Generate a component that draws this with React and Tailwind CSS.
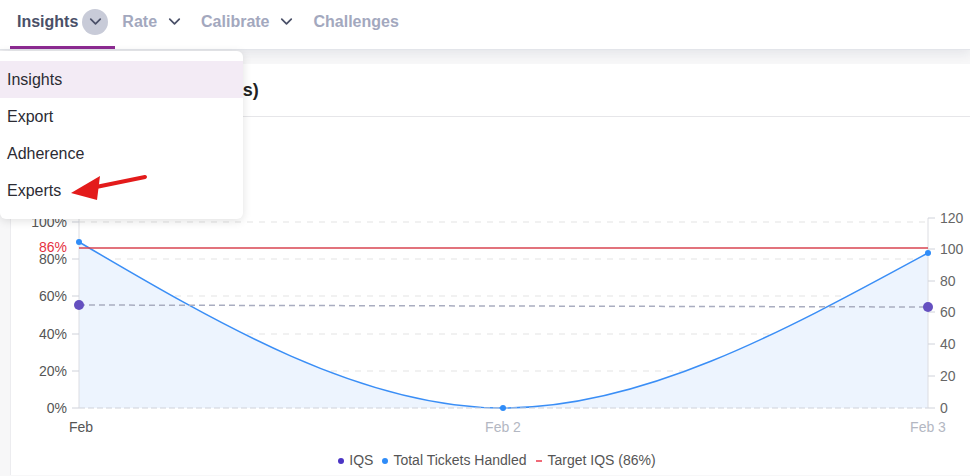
import { ChevronDown } from "lucide-react";

const font = { fontFamily: '"Liberation Sans", Arial, sans-serif' };

// chart geometry in page coordinates (svg is translated back by the card offset)
const leftTicks = [
  { y: 223, label: "100%" },
  { y: 260, label: "80%" },
  { y: 297, label: "60%" },
  { y: 335, label: "40%" },
  { y: 372, label: "20%" },
  { y: 409, label: "0%" },
];

const rightTicks = [
  { y: 219, label: "120" },
  { y: 250, label: "100" },
  { y: 282, label: "80" },
  { y: 313, label: "60" },
  { y: 345, label: "40" },
  { y: 377, label: "20" },
  { y: 409, label: "0" },
];

const curve =
  "M78 243 C219 326 361 409 502 409 C644 409 785 331 927 254";

function Chart() {
  return (
    <svg width="960" height="358" className="block" style={font}>
      <g transform="translate(-10,-118)">
        {leftTicks.slice(0, 5).map((t) => (
          <line
            key={t.y}
            x1="78"
            x2="927"
            y1={t.y}
            y2={t.y}
            stroke="#e3e3e3"
            strokeDasharray="6 6"
          />
        ))}

        {/* area + tickets line */}
        <path d={curve + " L927 409 L78 409 Z"} fill="#edf4fe" />
        <path d={curve} fill="none" stroke="#3a8ef6" strokeWidth="1.5" />

        {/* axes */}
        <line x1="78" x2="927" y1="409" y2="409" stroke="#cfd2da" strokeDasharray="6 3" />
        <line x1="78" x2="78" y1="219" y2="409" stroke="#dcdde2" />
        <line x1="927" x2="927" y1="219" y2="409" stroke="#dcdde2" />

        {leftTicks.map((t) => (
          <g key={t.label}>
            <line x1="71" x2="78" y1={t.y} y2={t.y} stroke="#cfd2da" />
            <text x="66" y={t.y + 5} textAnchor="end" fontSize="14" fill="#555">
              {t.label}
            </text>
          </g>
        ))}
        {rightTicks.map((t) => (
          <g key={t.label}>
            <line x1="927" x2="934" y1={t.y} y2={t.y} stroke="#cfd2da" />
            <text x="939" y={t.y + 5} fontSize="14" fill="#666">
              {t.label}
            </text>
          </g>
        ))}

        {/* target line */}
        <line x1="78" x2="927" y1="249" y2="249" stroke="#d94450" strokeWidth="1.3" />
        <text x="66" y="253" textAnchor="end" fontSize="14" fill="#e5323f">
          86%
        </text>

        {/* IQS */}
        <line x1="78" x2="927" y1="306" y2="308" stroke="#a9adc0" strokeWidth="1.5" strokeDasharray="6 4" />
        <circle cx="78" cy="306" r="5" fill="#6550c0" />
        <circle cx="927" cy="308" r="5" fill="#6550c0" />

        <circle cx="78" cy="243" r="3" fill="#2f8cf8" />
        <circle cx="502" cy="409" r="3" fill="#2f8cf8" />
        <circle cx="927" cy="254" r="3" fill="#2f8cf8" />

        <text x="80" y="433" textAnchor="middle" fontSize="14" fill="#555">Feb</text>
        <text x="502" y="433" textAnchor="middle" fontSize="14" fill="#b3b7c2">Feb 2</text>
        <text x="927" y="433" textAnchor="middle" fontSize="14" fill="#b3b7c2">Feb 3</text>
      </g>
    </svg>
  );
}

function Tab({ label, active, chevron }) {
  return (
    <div className="relative flex h-full items-center px-[7px] pb-[6px]">
      <span
        className={
          active
            ? "text-[16px] font-bold text-[#4a5068]"
            : "text-[16px] font-bold text-[#a3a8be]"
        }
      >
        {label}
      </span>
      {chevron && (
        <span
          className={
            active
              ? "ml-[4px] flex h-[26px] w-[26px] items-center justify-center rounded-full bg-[#c8cbd8] text-[#4a5068]"
              : "ml-[4px] flex h-[26px] w-[26px] items-center justify-center text-[#4a5068]"
          }
        >
          <ChevronDown size={19} strokeWidth={2.2} />
        </span>
      )}
      {active && <div className="absolute bottom-0 left-0 right-0 h-[3px] bg-[#8d2b92]" />}
    </div>
  );
}

export default function App() {
  return (
    <div className="relative h-[476px] w-[970px] overflow-hidden bg-[#f7f7f8]" style={font}>
      {/* NAV */}
      <div className="relative z-10 flex h-[50px] items-stretch border-b border-[#e3e5ea] bg-white pl-[10px] shadow-[0_4px_10px_rgba(30,40,80,0.08)]">
        <Tab label="Insights" active chevron />
        <Tab label="Rate" chevron />
        <Tab label="Calibrate" chevron />
        <Tab label="Challenges" />
      </div>

      {/* CARD */}
      <div className="ml-[10px] mt-[14px] border-l border-[#ececef] bg-white">
        <div className="flex h-[53px] items-center border-b border-[#e6e6e9] pl-[13px]">
          <h2 className="text-[18px] font-bold text-[#222]">IQS Over Time (All Experts)</h2>
        </div>
        <Chart />
      </div>

      {/* legend */}
      <div className="absolute left-0 right-0 top-[450px] flex justify-center text-[14px] text-[#555]">
        <div className="ml-[24px] flex items-center gap-[9px]">
          <span className="flex items-center gap-[5px]">
            <span className="h-[6px] w-[6px] rounded-full bg-[#4b35c4]" />
            IQS
          </span>
          <span className="flex items-center gap-[5px]">
            <span className="h-[6px] w-[6px] rounded-full bg-[#2f8cf8]" />
            Total Tickets Handled
          </span>
          <span className="flex items-center gap-[6px]">
            <span className="h-[2px] w-[6px] bg-[#f06a78]" />
            Target IQS (86%)
          </span>
        </div>
      </div>

      {/* DROPDOWN */}
      <div className="absolute left-0 top-[51px] z-20 w-[243px] rounded-r-md rounded-bl-md bg-white py-[10px] shadow-[0_2px_10px_rgba(0,0,0,0.12)]">
        {["Insights", "Export", "Adherence", "Experts"].map((item, i) => (
          <div
            key={item}
            className={
              i === 0
                ? "flex h-[37px] items-center bg-[#f3ebf5] pl-[7px] text-[16px] text-[#2b2b33]"
                : "flex h-[37px] items-center pl-[7px] text-[16px] text-[#2b2b33]"
            }
          >
            {item}
          </div>
        ))}
      </div>

      {/* arrow */}
      <svg className="absolute left-0 top-0 z-30" width="160" height="220">
        <line x1="145" y1="177" x2="96" y2="187" stroke="#e31b1b" strokeWidth="4" strokeLinecap="round" />
        <polygon points="71,193 100,176 97,200" fill="#e31b1b" />
      </svg>
    </div>
  );
}
